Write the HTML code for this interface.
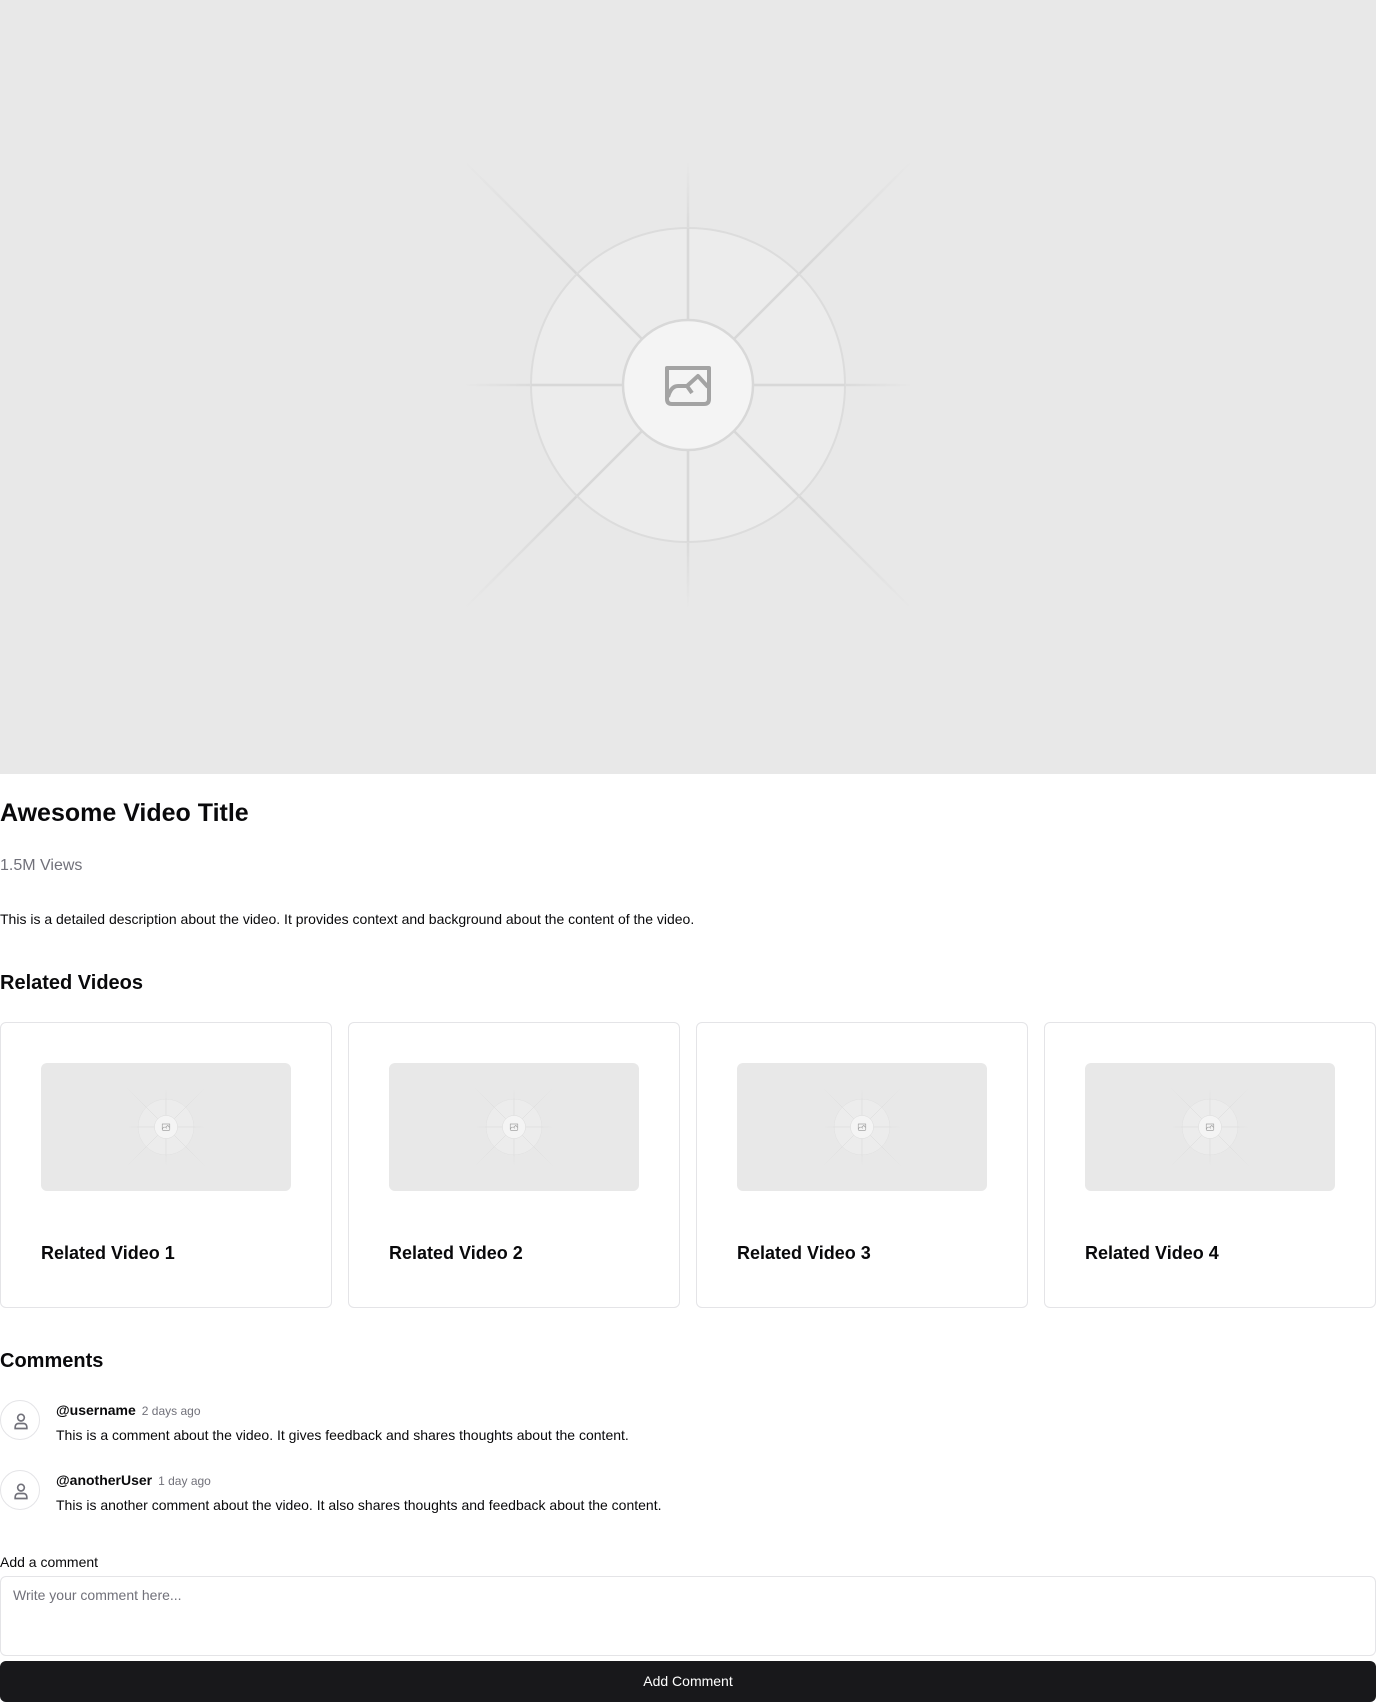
<!DOCTYPE html>
<html><head><meta charset="utf-8"><style>
*{box-sizing:border-box;margin:0;padding:0}
body{width:1376px;height:1702px;background:#fff;font-family:"Liberation Sans",sans-serif;color:#09090b;position:relative;overflow:hidden}
.abs{position:absolute}
.hero{left:0;top:0;width:1376px;height:774px;background:#e8e8e8}
h1{position:absolute;left:0;top:798px;font-size:25px;font-weight:700;line-height:30px}
.views{left:0;top:856px;font-size:16px;color:#71717a;line-height:20px}
.desc{left:0;top:910px;font-size:14px;line-height:18px}
h2{position:absolute;left:0;font-size:20px;font-weight:700;line-height:24px}
.card{position:absolute;top:1022px;width:332px;height:286px;border:1px solid #e4e4e7;border-radius:6px;background:#fff}
.thumb{position:absolute;left:40px;top:40px;width:250px;height:128px;background:#e8e8e8;border-radius:6px;overflow:hidden}
.thumb svg{position:absolute;left:85px;top:24px}
.ct{position:absolute;left:40px;top:219px;font-size:18px;font-weight:700;line-height:22px}
.av{position:absolute;left:0;width:40px;height:40px;border-radius:50%;border:1px solid #e4e4e7;background:#fff}
.av svg{position:absolute;left:10px;top:10px}
.un{position:absolute;left:56px;font-size:14px;font-weight:700;line-height:18px}
.un span{font-weight:400;font-size:12px;color:#71717a;margin-left:6px}
.ctext{position:absolute;left:56px;font-size:14px;line-height:18px}
.ta{left:0;top:1576px;width:1376px;height:80px;border:1px solid #e4e4e7;border-radius:6px;padding:10px 12px;font-size:14px;color:#71717a}
.btn{left:0;top:1661px;width:1376px;height:41px;background:#18181b;border-radius:6px;color:#fff;font-size:14px;text-align:center;line-height:41px}
</style></head><body>
<svg width="0" height="0" style="position:absolute"><defs>
<radialGradient id="fade" cx="0" cy="0" r="225" gradientUnits="userSpaceOnUse"><stop offset="0.6" stop-color="#d6d6d6"/><stop offset="1" stop-color="#d6d6d6" stop-opacity="0"/></radialGradient>
<radialGradient id="fade2" cx="0" cy="0" r="318" gradientUnits="userSpaceOnUse"><stop offset="0.5" stop-color="#d6d6d6"/><stop offset="1" stop-color="#d6d6d6" stop-opacity="0"/></radialGradient>
<symbol id="ph" viewBox="-225 -225 450 450">
<g stroke="url(#fade)" stroke-width="2.5">
<line x1="0" y1="-225" x2="0" y2="225"/><line x1="-225" y1="0" x2="225" y2="0"/></g>
<g stroke="url(#fade2)" stroke-width="2.5">
<line x1="-225" y1="-225" x2="225" y2="225"/><line x1="225" y1="-225" x2="-225" y2="225"/></g>
<circle r="157" fill="#efefef" fill-opacity="0.6" stroke="#dcdcdc" stroke-width="2"/>
<g stroke="#d8d8d8" stroke-width="2.5"><line x1="0" y1="-157" x2="0" y2="157"/><line x1="-157" y1="0" x2="157" y2="0"/>
<line x1="-111" y1="-111" x2="111" y2="111"/><line x1="111" y1="-111" x2="-111" y2="111"/></g>
<circle r="65" fill="#f4f4f4" stroke="#d8d8d8" stroke-width="2.5"/>
<g fill="none" stroke="#a3a3a3" stroke-width="4" stroke-linejoin="round">
<path d="M-21 -17 H21 V14 Q21 19 16 19 H-16 Q-21 19 -21 14 Z"/>
<path d="M-20 12 Q-17 1 -10 1 H-1 L10 -9 L20 2 M-1 1 L4 8"/></g>
</symbol></defs></svg>
<div class="abs hero"><svg class="abs" style="left:463px;top:160px" width="450" height="450"><use href="#ph"/></svg></div>
<h1>Awesome Video Title</h1>
<div class="abs views">1.5M Views</div>
<div class="abs desc">This is a detailed description about the video. It provides context and background about the content of the video.</div>
<h2 style="top:971px">Related Videos</h2>
<div class="card" style="left:0"><div class="thumb"><svg width="80" height="80"><use href="#ph"/></svg></div><div class="ct">Related Video 1</div></div>
<div class="card" style="left:348px"><div class="thumb"><svg width="80" height="80"><use href="#ph"/></svg></div><div class="ct">Related Video 2</div></div>
<div class="card" style="left:696px"><div class="thumb"><svg width="80" height="80"><use href="#ph"/></svg></div><div class="ct">Related Video 3</div></div>
<div class="card" style="left:1044px"><div class="thumb"><svg width="80" height="80"><use href="#ph"/></svg></div><div class="ct">Related Video 4</div></div>
<h2 style="top:1349px">Comments</h2>
<div class="av" style="top:1400px"><svg width="20" height="20" viewBox="0 0 24 24" fill="none" stroke="#71717a" stroke-width="2" stroke-linecap="round"><circle cx="12" cy="8" r="4"/><path d="M5 21v-2a4 4 0 0 1 4-4h6a4 4 0 0 1 4 4v2z"/></svg></div>
<div class="un" style="top:1401px">@username<span>2 days ago</span></div>
<div class="ctext" style="top:1426px">This is a comment about the video. It gives feedback and shares thoughts about the content.</div>
<div class="av" style="top:1470px"><svg width="20" height="20" viewBox="0 0 24 24" fill="none" stroke="#71717a" stroke-width="2" stroke-linecap="round"><circle cx="12" cy="8" r="4"/><path d="M5 21v-2a4 4 0 0 1 4-4h6a4 4 0 0 1 4 4v2z"/></svg></div>
<div class="un" style="top:1471px">@anotherUser<span>1 day ago</span></div>
<div class="ctext" style="top:1496px">This is another comment about the video. It also shares thoughts and feedback about the content.</div>
<div class="abs" style="left:0;top:1553px;font-size:14px;line-height:18px">Add a comment</div>
<div class="abs ta">Write your comment here...</div>
<div class="abs btn">Add Comment</div>
</body></html>
